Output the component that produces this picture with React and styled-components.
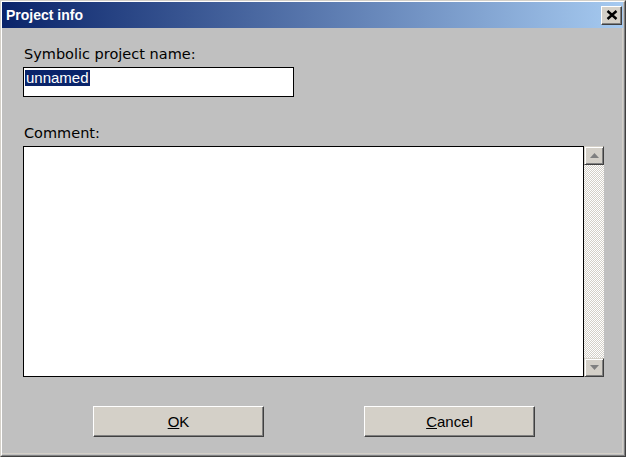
import React from "react";
import styled, { createGlobalStyle } from "styled-components";

const GlobalStyle = createGlobalStyle`
  html, body { margin: 0; padding: 0; background: #c0c0c0; }
  body { font-family: "Liberation Sans", Arial, sans-serif; }
`;

const Window = styled.div`
  width: 626px;
  height: 457px;
  box-sizing: border-box;
  background: #c0c0c0;
  border-left: 1px solid #d4d0c8;
  border-top: 1px solid #d4d0c8;
  border-right: 1px solid #404040;
  border-bottom: 1px solid #404040;
  display: flex;
  flex-direction: column;
`;

const Inner = styled.div`
  flex: 1;
  display: flex;
  flex-direction: column;
  border-left: 1px solid #ffffff;
  border-top: 1px solid #ffffff;
  border-right: 1px solid #808080;
  border-bottom: 1px solid #808080;
  padding: 0 1px 1px 0;
`;

const TitleBar = styled.div`
  height: 26px;
  display: flex;
  align-items: center;
  justify-content: space-between;
  padding: 0 1px 0 4px;
  background: linear-gradient(to right, #0a246a, #a6caf0);
`;

const Title = styled.span`
  color: #ffffff;
  font-weight: bold;
  font-size: 14px;
`;

const CloseButton = styled.div`
  width: 21px;
  height: 19px;
  box-sizing: border-box;
  background: #d4d0c8;
  border-top: 1px solid #ffffff;
  border-left: 1px solid #ffffff;
  border-right: 1px solid #404040;
  border-bottom: 1px solid #404040;
  box-shadow: inset -1px -1px 0 #808080;
  display: flex;
  align-items: center;
  justify-content: center;
`;

const Body = styled.div`
  flex: 1;
  display: flex;
  flex-direction: column;
  padding: 17px 20px 0 21px;
  border-right: 1px solid #d4d0c8;
  border-bottom: 1px solid #d4d0c8;
`;

const Label = styled.div`
  font-family: "DejaVu Sans", "Liberation Sans", sans-serif;
  font-size: 14.5px;
  color: #000000;
  height: 18px;
  line-height: 18px;
  margin-left: 1px;
  margin-top: ${p => p.$top || 0}px;
`;

const NameInput = styled.div`
  width: 271px;
  height: 30px;
  box-sizing: border-box;
  border: 1px solid #000000;
  background: #ffffff;
  margin-top: 4px;
  padding: 1px;
`;

const Selected = styled.span`
  display: inline-block;
  background: #0a246a;
  color: #ffffff;
  font-size: 15px;
  line-height: 16px;
  padding: 0 1px;
`;

const CommentBox = styled.div`
  margin-top: 4px;
  width: 581px;
  height: 231px;
  display: flex;
`;

const TextArea = styled.div`
  flex: 1;
  background: #ffffff;
  border: 1px solid #000000;
`;

const ScrollBar = styled.div`
  width: 20px;
  display: flex;
  flex-direction: column;
  background-color: #ffffff;
  background-image: repeating-conic-gradient(#d4d0c8 0 25%, #ffffff 0 50%);
  background-size: 2px 2px;
`;

const ArrowButton = styled.div`
  height: 19px;
  box-sizing: border-box;
  background: #d4d0c8;
  border-top: 1px solid #d4d0c8;
  border-left: 1px solid #d4d0c8;
  border-right: 1px solid #404040;
  border-bottom: 1px solid #404040;
  box-shadow: inset 1px 1px 0 #ffffff, inset -1px -1px 0 #808080;
  display: flex;
  align-items: center;
  justify-content: center;
`;

const Track = styled.div`
  flex: 1;
`;

const ButtonRow = styled.div`
  display: flex;
  gap: 100px;
  margin-top: 29px;
  padding-left: 70px;
`;

const Button = styled.div`
  width: 171px;
  height: 31px;
  box-sizing: border-box;
  background: #d4d0c8;
  border-top: 1px solid #ffffff;
  border-left: 1px solid #ffffff;
  border-right: 1px solid #404040;
  border-bottom: 1px solid #404040;
  box-shadow: inset -1px -1px 0 #808080;
  display: flex;
  align-items: center;
  justify-content: center;
  font-size: 15px;
  color: #000000;
`;

const Arrow = ({ down }) => (
  <svg width="9" height="5" viewBox="0 0 9 5">
    <polygon points={down ? "0,0 9,0 4.5,5" : "0,5 9,5 4.5,0"} fill="#808080" />
  </svg>
);

export default function App() {
  return (
    <>
      <GlobalStyle />
      <Window>
        <Inner>
          <TitleBar>
            <Title>Project info</Title>
            <CloseButton>
              <svg width="12" height="10" viewBox="0 0 12 10">
                <path d="M1.5 1 L10.5 9 M10.5 1 L1.5 9" stroke="#000" strokeWidth="2.4" />
              </svg>
            </CloseButton>
          </TitleBar>
          <Body>
            <Label>Symbolic project name:</Label>
            <NameInput>
              <Selected>unnamed</Selected>
            </NameInput>
            <Label $top={27}>Comment:</Label>
            <CommentBox>
              <TextArea />
              <ScrollBar>
                <ArrowButton><Arrow /></ArrowButton>
                <Track />
                <ArrowButton><Arrow down /></ArrowButton>
              </ScrollBar>
            </CommentBox>
            <ButtonRow>
              <Button><u>O</u>K</Button>
              <Button><u>C</u>ancel</Button>
            </ButtonRow>
          </Body>
        </Inner>
      </Window>
    </>
  );
}
